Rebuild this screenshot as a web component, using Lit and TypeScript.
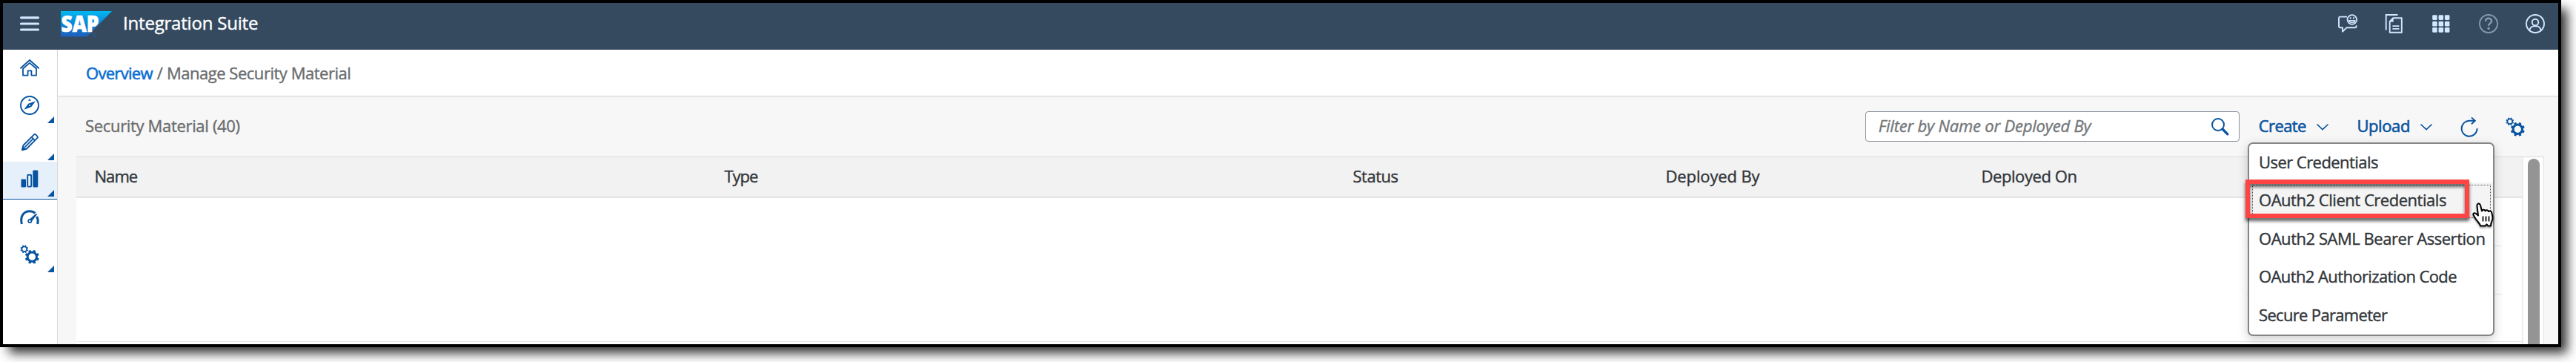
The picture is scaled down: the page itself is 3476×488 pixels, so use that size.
import { LitElement, html, css, svg, nothing } from 'lit';
import { customElement, property } from 'lit/decorators.js';

const gear = (cx: number, cy: number, r: number, hole: number, tooth: number) => svg`
  <g transform="translate(${cx} ${cy})">
    <circle r=${(r + hole) / 2} fill="none" stroke="currentColor" stroke-width=${r - hole}></circle>
    ${[0, 45, 90, 135, 180, 225, 270, 315].map(
      (a) => svg`<rect x=${-tooth / 2} y=${-r - tooth * 0.55} width=${tooth} height=${tooth * 0.8} rx=".5" fill="currentColor" transform="rotate(${a + 22.5})"></rect>`
    )}
  </g>`;

const icons: Record<string, unknown> = {
  menu: svg`<path d="M1.5 4.8h23M1.5 13h23M1.5 21h23" stroke-width="3.2" stroke-linecap="round"/>`,
  home: svg`<path d="M1 13.8 13 3.100l12 10.700" stroke-width="1.9" stroke-linecap="round"/><path d="M4 14.500v9.100h6.600v-6.300h4.800v6.300H22v-9.100l-9-7.600z" stroke-width="1.800" stroke-linejoin="round"/>`,
  compass: svg`<circle cx="13" cy="13" r="12" stroke-width="1.900"/><path d="M5.300 18.700 11.200 10.700 21 7.200l-5.900 8.100z" fill="currentColor"/><circle cx="13.100" cy="13" r="1" fill="#fff"/><path d="M11 6.700 13 4l2 2.700z" fill="currentColor"/>`,
  pencil: svg`<path d="M2.800 23.300 4.400 17 19 2.400a1.500 1.500 0 0 1 2.100 0l2.400 2.400a1.500 1.500 0 0 1 0 2.100L9 21.500z" stroke-width="1.900" stroke-linejoin="round"/><path d="M15.700 5.800l4.500 4.500M6 19.800 18.200 7.700" stroke-width="1.700"/><path d="M2.300 24l1.600-6 4.500 4.300z" fill="currentColor"/>`,
  bars: svg`<rect x="1.500" y="13.500" width="6.500" height="11" rx="1.300" fill="currentColor"/><rect x="10.200" y="7.700" width="5" height="15.900" rx="1" stroke-width="1.900"/><rect x="17.300" y="1.500" width="7" height="23" rx="1.400" fill="currentColor"/>`,
  gauge: svg`<path d="M2.300 22C0 12 4.500 4.800 13 4.800c3 0 5.600.9 7.400 2.600M23.700 22c.9-4 .5-7.200-1-10.200" stroke-width="3"/><circle cx="13.300" cy="18" r="2" stroke-width="2"/><path d="M12 16.300 21.800 7.700l1.300 1.200-7.800 10.200z" fill="currentColor"/><circle cx="13.300" cy="18" r="1.200" fill="#fff"/>`,
  gears: svg`${gear(5.8, 5.8, 4.3, 2.500, 2)}${gear(16.300, 16.300, 7.700, 4.700, 3.300)}`,
  feedback: svg`<path d="M12 3.600H2.600A1.700 1.700 0 0 0 1 5.300v11.300a1.700 1.700 0 0 0 1.600 1.700H6v5.400l5.400-5.400h11.500a1.700 1.700 0 0 0 1.700-1.700v-1.300" stroke-width="1.900" stroke-linejoin="round"/><circle cx="18.800" cy="7.500" r="6.300" stroke-width="1.800"/><path d="M14.800 8.700c1 3.700 7 3.700 8 0z" stroke-width="1.400"/><path d="M16.700 4.300v2.200M20.900 4.300v2.200" stroke-width="1.800"/>`,
  documents: svg`<path d="M1.700 21.500V1h15.800" stroke-width="1.900"/><path d="M11.300 5.200h11.500v19.600H6.700V10z" stroke-width="1.900" stroke-linejoin="round"/><path d="M6.700 10.500l5-5.300v5.300z" fill="currentColor"/><path d="M10.400 16.200h9M10.400 19.800h9" stroke-width="1.700"/>`,
  grid: svg`${[1.2, 9.800, 18].flatMap((y) => [1.200, 9.600, 17.900].map((x) => svg`<rect x=${x} y=${y} width="6.500" height="6.700" rx="1.300" fill="currentColor"></rect>`))}`,
  help: svg`<circle cx="13" cy="13" r="12" stroke-width="1.900"/><path d="M9 9.700c0-5.200 8-5 8-.3 0 3.100-3.900 2.900-3.900 6.400" stroke-width="2.500"/><circle cx="13.100" cy="19.300" r="1.700" fill="currentColor"/>`,
  user: svg`<circle cx="13" cy="13" r="12" stroke-width="1.900"/><circle cx="13" cy="11" r="4.300" stroke-width="1.900"/><path d="M5.300 22c1-4 3.700-5.600 5.700-5.600h4c2 0 4.700 1.600 5.700 5.600" stroke-width="1.900"/>`,
  search: svg`<circle cx="10" cy="10" r="8" stroke-width="2"/><path d="M16 16l6.800 6.800" stroke-width="3.300" stroke-linecap="round"/>`,
  chevron: svg`<path d="M6 10l7 6.500 7-6.500" stroke-width="1.700" stroke-linecap="round"/>`,
  refresh: svg`<path d="M19.600 4.800h-6.100A10.500 10.500 0 1 0 23.600 15.800" stroke-width="1.900" stroke-linecap="round"/><path d="M16.500.9l4.300 3.900-4.300 4" stroke-width="1.900" stroke-linecap="round"/>`,
};

@customElement('ui-icon')
class UiIcon extends LitElement {
  @property() name = '';
  static styles = css`
    :host { display: block; flex: none; width: 26px; height: 26px; }
    svg { display: block; overflow: visible; }
    [stroke-width] { stroke: currentColor; }
  `;
  render() {
    return html`<svg width="26" height="26" viewBox="0 0 26 26" fill="none">${icons[this.name]}</svg>`;
  }
}

type Label = { text: string; track: number };

const columns: Label[] = [
  { text: 'Name', track: -0.95 },
  { text: 'Type', track: -1.05 },
  { text: 'Status', track: -0.5 },
  { text: 'Deployed By', track: -0.13 },
  { text: 'Deployed On', track: -0.43 },
];

const menu: Label[] = [
  { text: 'User Credentials', track: -0.55 },
  { text: 'OAuth2 Client Credentials', track: -0.47 },
  { text: 'OAuth2 SAML Bearer Assertion', track: -0.46 },
  { text: 'OAuth2 Authorization Code', track: -0.6 },
  { text: 'Secure Parameter', track: -0.67 },
];

const nav = [
  { icon: 'home', more: false },
  { icon: 'compass', more: true },
  { icon: 'pencil', more: true },
  { icon: 'bars', more: true, selected: true },
  { icon: 'gauge', more: false },
  { icon: 'gears', more: true },
];

const label = (l: Label) => html`<span style="letter-spacing:${l.track}px">${l.text}</span>`;

@customElement('app-root')
class AppRoot extends LitElement {
  static styles = css`
    :host { display: block; width: 3476px; height: 488px; overflow: hidden; background: #fff;
      font: 22px/30px "Open Sans", "Noto Sans", sans-serif; color: #32363a; -webkit-text-stroke: 0.4px; }
    * { box-sizing: border-box; }
    span { white-space: nowrap; }
    .frame { position: relative; width: 3456px; height: 468px; border: 4px solid #000; background: #fff;
      display: flex; flex-direction: column; box-shadow: 10px 10px 14px -2px rgba(0, 0, 0, 0.8); }
    .shell { flex: none; height: 63px; padding: 0 18px 7px 23px; background: #354a5f; color: #d1e8ff;
      display: flex; align-items: center; }
    .logo { margin: 0 14px 0 29px; display: block; -webkit-text-stroke: 0; }
    .title { font-size: 24px; color: #fff; letter-spacing: -0.2px; padding-bottom: 2px; }
    .actions { margin-left: auto; display: flex; gap: 37.3px; }
    .dim { opacity: 0.5; }
    .body { flex: 1; display: flex; min-height: 0; }
    nav { width: 74px; border-right: 1px solid #d9d9d9; background: #fff; color: #0854a0; flex: none; }
    .nav { height: 50.4px; padding: 0 4px 2px 23px; display: flex; align-items: center; justify-content: space-between; }
    .selected { background: #e5f0fa; border-bottom: 1px solid #0854a0; padding-bottom: 3px; }
    .more { align-self: flex-end; border-bottom: 9px solid #0854a0; border-left: 9px solid transparent; }
    main { flex: 1; min-width: 0; background: #f7f7f7; display: flex; flex-direction: column; }
    .crumbs { flex: none; height: 63px; padding: 0 0 0 38px; background: #fff; border-bottom: 1px solid #d9d9d9;
      box-shadow: 0 1px 3px rgba(0, 0, 0, 0.05); display: flex; align-items: center; color: #6a6d70; }
    .link { color: #0a6ed1; letter-spacing: -0.7px; -webkit-text-stroke: 0.6px; }
    .slash { margin: 0 5px 0 6px; }
    .bar { flex: none; height: 81px; padding: 0 45px 0 37px; display: flex; align-items: center; color: #0854a0; }
    .bar span { padding-bottom: 3px; }
    .heading { color: #6a6d70; letter-spacing: -0.33px; margin-right: auto; }
    .search { width: 505px; height: 41px; border: 1px solid #89919a; border-radius: 4px; background: #fff;
      padding: 0 12px 0 17px; display: flex; align-items: center; justify-content: space-between; }
    .hint { font-style: italic; color: #74777a; letter-spacing: -0.2px; }
    .button { display: flex; align-items: center; -webkit-text-stroke: 0.6px; }
    .create { margin-left: 26px; }
    .upload { margin-left: 33.5px; }
    .button ui-icon { margin-left: 9px; }
    .refresh { margin-left: 32px; }
    .settings { margin-left: 36px; }
    .area { flex: 1; min-height: 0; margin: 0 19px 0 25px; border-top: 1px solid #d9d9d9; display: flex; overflow: hidden; }
    .table { flex: 1; background: #fff; }
    .head { height: 55px; padding-bottom: 3px; background: #f2f2f2; border-bottom: 2px solid #e4e4e4;
      display: grid; grid-template-columns: 850px 848px 422px 426px 1fr; align-items: center; }
    .head span { padding-left: 24.5px; }
    .row { height: 65px; display: flex; justify-content: space-between; }
    .row i { width: 1px; border-bottom: 1px solid #e5e5e5; }
    .row .wide { width: 344px; margin: 0 26px 0 auto; }
    .row:last-child { height: 64px; border-bottom: 1px solid #e5e5e5; }
    .track { width: 30px; background: #fff; border: solid #ededed; border-width: 0 2px; padding: 2px 4px 0 6px; }
    .thumb { height: 300px; background: #949494; border-radius: 8px 8px 0 0; }
    .menu { position: absolute; left: 3029px; top: 188px; width: 333px; height: 261px; border: 2px solid #858585;
      border-radius: 7px; background: #fff; box-shadow: 0 4px 14px rgba(0, 0, 0, 0.2);
      display: flex; flex-direction: column; overflow: hidden; }
    .item { height: 51.5px; flex: none; padding-left: 13px; display: flex; align-items: center; }
    .menu span { padding-bottom: 4px; }
    .focused { background: #f4f4f4; padding: 3px 3px 3px 4px; }
    .focused div { flex: 1; height: 45px; border: 1px dotted #555; padding-left: 8px; display: flex; align-items: center; }
    .mark { position: absolute; left: 3026px; top: 238px; width: 302px; height: 52px; border: 6px solid #ff4444;
      filter: drop-shadow(0 4px 2px rgba(0, 0, 0, 0.6)); }
    .pointer { position: absolute; left: 3332px; top: 269px; filter: drop-shadow(0 2px 1px rgba(0, 0, 0, 0.35)); }
  `;

  render() {
    return html`<div class="frame">
      <header class="shell">
        <ui-icon name="menu"></ui-icon>
        <svg class="logo" width="70" height="35" viewBox="0 0 70 35">
          <defs><linearGradient id="blue" x2="0" y2="1"><stop stop-color="#00b8f1"/><stop offset=".5" stop-color="#0d83d9"/><stop offset="1" stop-color="#1e5fbb"/></linearGradient></defs>
          <path d="M0 0h69L35 34.500H0z" fill="url(#blue)"/>
          <text x="0.500" y="28" textLength="51" lengthAdjust="spacingAndGlyphs" fill="#fff" stroke="#fff" stroke-width=".7" font-family="Open Sans, sans-serif" font-weight="800" font-size="30">SAP</text>
          <circle cx="45.500" cy="32.500" r="2" fill="none" stroke="#1e5fa5" stroke-width="1"/>
        </svg>
        <span class="title">Integration Suite</span>
        <div class="actions">
          <ui-icon name="feedback"></ui-icon>
          <ui-icon name="documents"></ui-icon>
          <ui-icon name="grid"></ui-icon>
          <ui-icon class="dim" name="help"></ui-icon>
          <ui-icon name="user"></ui-icon>
        </div>
      </header>
      <div class="body">
        <nav>
          ${nav.map((n) => html`<div class="nav ${n.selected ? 'selected' : ''}">
            <ui-icon name=${n.icon}></ui-icon>${n.more ? html`<div class="more"></div>` : nothing}
          </div>`)}
        </nav>
        <main>
          <div class="crumbs">
            <span class="link">Overview</span><span class="slash">/</span>${label({ text: 'Manage Security Material', track: -0.47 })}
          </div>
          <div class="bar">
            <span class="heading">Security Material (40)</span>
            <div class="search"><span class="hint">Filter by Name or Deployed By</span><ui-icon name="search"></ui-icon></div>
            <div class="button create">${label({ text: 'Create', track: -0.56 })}<ui-icon name="chevron"></ui-icon></div>
            <div class="button upload">${label({ text: 'Upload', track: -0.4 })}<ui-icon name="chevron"></ui-icon></div>
            <ui-icon class="refresh" name="refresh"></ui-icon>
            <ui-icon class="settings" name="gears"></ui-icon>
          </div>
          <div class="area">
            <div class="table">
              <div class="head">${columns.map(label)}</div>
              <div class="row"><i></i><i class="wide"></i><i></i></div>
              <div class="row"><i></i><i class="wide"></i><i></i></div>
              <div class="row"></div>
            </div>
            <div class="track"><div class="thumb"></div></div>
          </div>
        </main>
      </div>
      <div class="menu">
        ${menu.map((m, i) => i === 1
          ? html`<div class="item focused"><div>${label(m)}</div></div>`
          : html`<div class="item">${label(m)}</div>`)}
      </div>
      <div class="mark"></div>
      <svg class="pointer" width="30" height="34" viewBox="0 0 30 34" fill="#fff" stroke="#000" stroke-width="2" stroke-linejoin="round">
        <path d="M11 31.500c-1-3.500-5-7-7-10.500-1.500-2.500-3.500-4.500-2.500-6 1.500-2 4 0 6.500 2.500L6.500 5C6 1 10 0 11 4l2 7.500c.5-2.500 4-2.500 4.500 0 1-2 4-1.500 4.500.8 1-1.500 4-1 4.200 1.200.9 4.500 2.500 7.500.3 11.500-1.200 2.500-1.500 4-1.500 6.500h-3.800l-1.700-2.200-2 2.200z"/>
        <path d="M14.500 18.500v7M18.500 18.500v7M22.500 18.500v7" stroke-width="1.700"/>
      </svg>
    </div>`;
  }
}
